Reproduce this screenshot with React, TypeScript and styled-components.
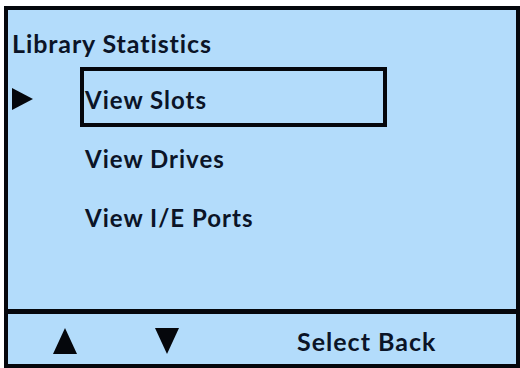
import React from "react";
import styled, { createGlobalStyle } from "styled-components";

const Global = createGlobalStyle`
  html, body { margin: 0; padding: 0; background: #ffffff; }
  body { font-family: "Lato", "Open Sans", sans-serif; }
`;

const Page = styled.div`
  padding: 6px 0 0 4px;
  width: 520px;
  height: 368px;
  box-sizing: border-box;
`;

const Screen = styled.div`
  width: 516px;
  height: 362px;
  box-sizing: border-box;
  border: 4px solid #05070c;
  background: #b3dcfb;
  display: flex;
  flex-direction: column;
`;

const Content = styled.div`
  flex: 1;
  padding: 19px 0 0 4px;
  display: flex;
  flex-direction: column;
`;

const Title = styled.div`
  font-size: 25px;
  font-weight: 700;
  letter-spacing: 0.9px;
  color: #0b1427;
  line-height: 28px;
  margin-bottom: 10px;
`;

const Menu = styled.div`
  display: flex;
  flex-direction: column;
`;

const Row = styled.div`
  display: grid;
  grid-template-columns: 68px 307px;
  align-items: center;
  height: 59px;
`;

const Pointer = styled.svg`
  width: 21px;
  height: 22px;
  margin-top: 3px;
`;

const Item = styled.div<{ $selected?: boolean }>`
  box-sizing: border-box;
  height: 60px;
  border: 4px solid ${(p) => (p.$selected ? "#05070c" : "transparent")};
  padding-left: 1px;
  padding-top: 4px;
  display: flex;
  align-items: center;
  font-size: 24px;
  font-weight: 700;
  letter-spacing: 1px;
  color: #0b1427;
`;

const Footer = styled.div`
  height: 55px;
  box-sizing: border-box;
  border-top: 5px solid #05070c;
  display: flex;
  align-items: center;
  padding-left: 45px;
`;

const Arrow = styled.svg<{ $gap: number }>`
  width: 24px;
  height: 26px;
  margin-right: ${(p) => p.$gap}px;
  margin-top: 3px;
`;

const SoftKeys = styled.div`
  font-size: 25px;
  font-weight: 700;
  letter-spacing: 1px;
  color: #0b1427;
  margin-top: 4px;
`;

const items = ["View Slots", "View Drives", "View I/E Ports"];

export default function App() {
  return (
    <>
      <Global />
      <Page>
        <Screen>
          <Content>
            <Title>Library Statistics</Title>
            <Menu>
              {items.map((label, i) => (
                <Row key={label}>
                  {i === 0 ? (
                    <Pointer viewBox="0 0 21 22">
                      <polygon points="0,0 21,11 0,22" fill="#05070c" />
                    </Pointer>
                  ) : (
                    <span />
                  )}
                  <Item $selected={i === 0}>{label}</Item>
                </Row>
              ))}
            </Menu>
          </Content>
          <Footer>
            <Arrow $gap={78} viewBox="0 0 24 26">
              <polygon points="12,0 24,26 0,26" fill="#05070c" />
            </Arrow>
            <Arrow $gap={118} viewBox="0 0 24 26">
              <polygon points="0,0 24,0 12,26" fill="#05070c" />
            </Arrow>
            <SoftKeys>Select Back</SoftKeys>
          </Footer>
        </Screen>
      </Page>
    </>
  );
}
